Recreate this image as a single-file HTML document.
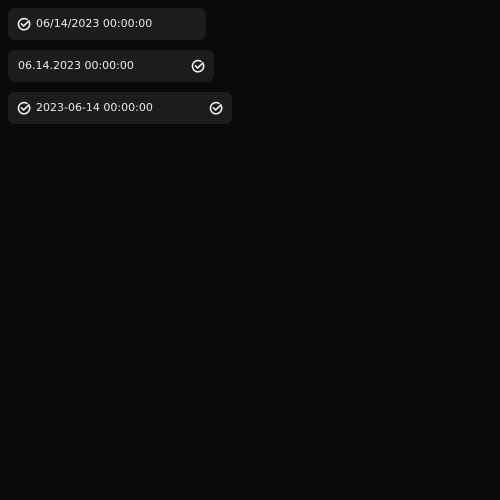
<!DOCTYPE html>
<html><head><style>
html,body{margin:0;padding:0;width:500px;height:500px;background:#0a0a0a;overflow:hidden}
.b{position:absolute;left:8px;height:32px;background:#1c1c1c;border-radius:7px;color:#e8e8e8;font-family:"DejaVu Sans","Liberation Sans",sans-serif;font-size:11px;line-height:32px}
.b span{position:absolute;top:0}
svg{position:absolute;top:9px;width:14px;height:14px}
</style></head><body>
<div class="b" style="top:8px;width:198px">
<svg style="left:9px" viewBox="0 0 14 14"><path d="M12.3 5.2A5.6 5.6 0 1 1 10 2.4" fill="none" stroke="#eee" stroke-width="1.6" stroke-linecap="round"/><path d="M4.4 6.8L6.6 9 12 3.8" fill="none" stroke="#eee" stroke-width="1.6" stroke-linecap="round" stroke-linejoin="round"/></svg>
<span style="left:28px">06/14/2023 00:00:00</span></div>
<div class="b" style="top:50px;width:206px">
<span style="left:10px">06.14.2023 00:00:00</span>
<svg style="left:183px" viewBox="0 0 14 14"><path d="M12.3 5.2A5.6 5.6 0 1 1 10 2.4" fill="none" stroke="#eee" stroke-width="1.6" stroke-linecap="round"/><path d="M4.4 6.8L6.6 9 12 3.8" fill="none" stroke="#eee" stroke-width="1.6" stroke-linecap="round" stroke-linejoin="round"/></svg></div>
<div class="b" style="top:92px;width:224px">
<svg style="left:9px" viewBox="0 0 14 14"><path d="M12.3 5.2A5.6 5.6 0 1 1 10 2.4" fill="none" stroke="#eee" stroke-width="1.6" stroke-linecap="round"/><path d="M4.4 6.8L6.6 9 12 3.8" fill="none" stroke="#eee" stroke-width="1.6" stroke-linecap="round" stroke-linejoin="round"/></svg>
<span style="left:28px">2023-06-14 00:00:00</span>
<svg style="left:201px" viewBox="0 0 14 14"><path d="M12.3 5.2A5.6 5.6 0 1 1 10 2.4" fill="none" stroke="#eee" stroke-width="1.6" stroke-linecap="round"/><path d="M4.4 6.8L6.6 9 12 3.8" fill="none" stroke="#eee" stroke-width="1.6" stroke-linecap="round" stroke-linejoin="round"/></svg></div>
</body></html>
